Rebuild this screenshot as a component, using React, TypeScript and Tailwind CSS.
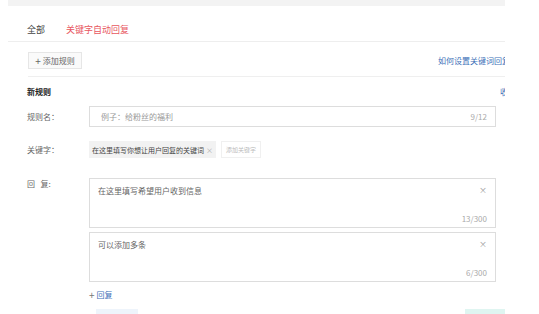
export default function App() {
  return (
    <div className="w-[539px] h-[314px] bg-white overflow-hidden font-['Noto_Sans_CJK_SC',sans-serif] text-[8px] leading-[10px] text-[#555]">
      <div className="ml-[8px] w-[497px] overflow-hidden">
        <div className="h-[6px] bg-[#f3f3f3]" />

        {/* tabs */}
        <div className="h-[36px] pt-[19px] pl-[19px] flex gap-[21px] border-b border-[#eeeeee] text-[9px]">
          <span className="text-[#444]">全部</span>
          <span className="text-[#e8575f]">关键字自动回复</span>
        </div>

        {/* toolbar */}
        <div className="ml-[20px] h-[35px] pt-[10px] flex border-b border-[#efefef]">
          <button className="shrink-0 h-[17px] w-[54px] border border-[#e6e6e6] bg-[#fafafa] text-[#666] text-[8px] flex items-center justify-center gap-[2px]">
            <span className="text-[10px]">+</span>添加规则
          </button>
          <a className="shrink-0 ml-[356px] mt-[4px] whitespace-nowrap text-[#3d6fb8] text-[8px]">如何设置关键词回复</a>
        </div>

        {/* form */}
        <div className="pl-[19px]">
          <div className="mt-[10px] flex h-[10px]">
            <span className="shrink-0 whitespace-nowrap font-bold text-[#222]">新规则</span>
            <span className="shrink-0 ml-[449px] text-[#3d6fb8] whitespace-nowrap">收起</span>
          </div>

          <div className="mt-[9px] flex items-center">
            <span className="shrink-0 w-[62px] text-[#666]">规则名：</span>
            <div className="shrink-0 w-[407px] h-[21px] border border-[#dddddd] flex items-center justify-between pl-[11px] pr-[8px]">
              <span className="text-[#999]">例子：给粉丝的福利</span>
              <span className="text-[#aaa]">9/12</span>
            </div>
          </div>

          <div className="mt-[14px] flex items-center">
            <span className="shrink-0 w-[62px] text-[#666]">关键字：</span>
            <div className="h-[17px] bg-[#f2f2f2] flex items-center px-[3px] text-[7px] text-[#444] whitespace-nowrap">
              在这里填写你想让用户回复的关键词
              <span className="ml-[2px] text-[#aaa]">×</span>
            </div>
            <div className="ml-[5px] h-[17px] border border-[#f0f0f0] px-[4px] flex items-center text-[6px] text-[#bbb] whitespace-nowrap">
              添加关键字
            </div>
          </div>

          <div className="mt-[20px] flex">
            <span className="shrink-0 w-[62px] pt-[1px] text-[#666]">回&nbsp;&nbsp;&nbsp;复:</span>
            <div className="flex flex-col gap-[4px]">
              <div className="w-[407px] h-[50px] border border-[#dddddd] relative">
                <span className="absolute left-[8px] top-[7px] text-[#666]">在这里填写希望用户收到信息</span>
                <span className="absolute right-[8px] top-[6px] text-[#999]">×</span>
                <span className="absolute right-[8px] bottom-[3px] text-[#aaa]">13/300</span>
              </div>
              <div className="w-[407px] h-[50px] border border-[#dddddd] relative">
                <span className="absolute left-[8px] top-[7px] text-[#666]">可以添加多条</span>
                <span className="absolute right-[8px] top-[6px] text-[#999]">×</span>
                <span className="absolute right-[8px] bottom-[3px] text-[#aaa]">6/300</span>
              </div>
              <div className="mt-[4px] flex items-center gap-[2px]">
                <span className="text-[10px] text-[#777]">+</span>
                <span className="text-[#3d6fb8]">回复</span>
              </div>
            </div>
          </div>

          <div className="mt-[9px] flex">
            <span className="shrink-0 ml-[69px] w-[42px] h-[6px] bg-[#eef4fb]" />
            <span className="shrink-0 ml-[327px] w-[48px] h-[12px] bg-[#dff5f1]" />
          </div>
        </div>
      </div>
    </div>
  );
}
